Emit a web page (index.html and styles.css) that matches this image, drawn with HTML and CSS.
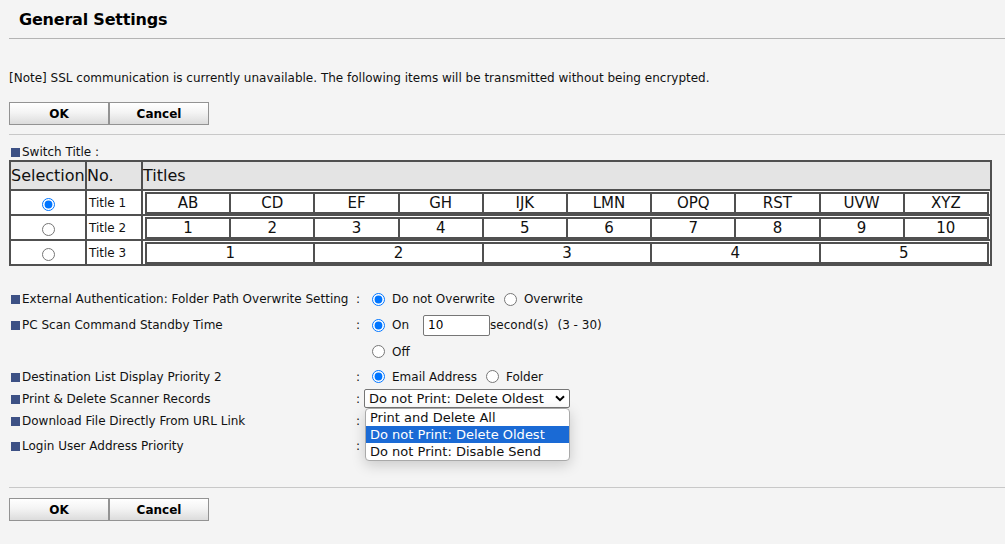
FILE: index.html
```html
<html>
    <head>
        <title>General Settings</title>
        <meta name="viewport" content="width=device-width, initial-scale=1" />
        <link rel="stylesheet" href="styles.css">
    </head>
    <body>
        <form class="page" method="post" action="/post">

            <h1 class="page__title">General Settings</h1>
            <div class="rule rule--dark"></div>

            <p class="note">[Note] SSL communication is currently unavailable. The following items will be transmitted without being encrypted.</p>

            <div class="buttons">
                <button type="button" class="button">OK</button>
                <button type="button" class="button">Cancel</button>
            </div>
            <div class="rule rule--top"></div>

            <div class="section"><span class="bullet"></span>Switch Title :</div>

            <table class="switch">
                <tr class="switch__head">
                    <th class="switch__sel">Selection</th>
                    <th class="switch__no">No.</th>
                    <th class="switch__titles">Titles</th>
                </tr>
                <tr>
                    <td class="switch__radio"><input type="radio" name="title" checked></td>
                    <td class="switch__name">Title 1</td>
                    <td class="switch__cells">
                        <table class="titles">
                            <tr><td>AB</td><td>CD</td><td>EF</td><td>GH</td><td>IJK</td><td>LMN</td><td>OPQ</td><td>RST</td><td>UVW</td><td>XYZ</td></tr>
                        </table>
                    </td>
                </tr>
                <tr>
                    <td class="switch__radio"><input type="radio" name="title"></td>
                    <td class="switch__name">Title 2</td>
                    <td class="switch__cells">
                        <table class="titles">
                            <tr><td>1</td><td>2</td><td>3</td><td>4</td><td>5</td><td>6</td><td>7</td><td>8</td><td>9</td><td>10</td></tr>
                        </table>
                    </td>
                </tr>
                <tr>
                    <td class="switch__radio"><input type="radio" name="title"></td>
                    <td class="switch__name">Title 3</td>
                    <td class="switch__cells">
                        <table class="titles">
                            <tr><td>1</td><td>2</td><td>3</td><td>4</td><td>5</td></tr>
                        </table>
                    </td>
                </tr>
            </table>

            <div class="settings">
                <div class="setting setting--first">
                    <div class="setting__label"><span class="bullet"></span>External Authentication: Folder Path Overwrite Setting</div>
                    <div class="setting__colon">:</div>
                    <div class="setting__value">
                        <label class="choice"><input type="radio" name="overwrite" checked>Do not Overwrite</label>
                        <label class="choice"><input type="radio" name="overwrite">Overwrite</label>
                    </div>
                </div>

                <div class="setting">
                    <div class="setting__label"><span class="bullet"></span>PC Scan Command Standby Time</div>
                    <div class="setting__colon">:</div>
                    <div class="setting__value">
                        <label class="choice choice--on"><input type="radio" name="standby" checked>On</label>
                        <input type="text" class="field" value="10">
                        <span class="unit">second(s)</span>
                        <span class="range">(3 - 30)</span>
                    </div>
                </div>

                <div class="setting setting--off">
                    <div class="setting__label"></div>
                    <div class="setting__colon"></div>
                    <div class="setting__value">
                        <label class="choice"><input type="radio" name="standby">Off</label>
                    </div>
                </div>

                <div class="setting setting--dest">
                    <div class="setting__label"><span class="bullet"></span>Destination List Display Priority 2</div>
                    <div class="setting__colon">:</div>
                    <div class="setting__value">
                        <label class="choice"><input type="radio" name="dest" checked>Email Address</label>
                        <label class="choice"><input type="radio" name="dest">Folder</label>
                    </div>
                </div>

                <div class="setting setting--short">
                    <div class="setting__label"><span class="bullet"></span>Print &amp; Delete Scanner Records</div>
                    <div class="setting__colon">:</div>
                    <div class="setting__value">
                        <div class="dropdown">
                            <div class="dropdown__box">
                                <span>Do not Print: Delete Oldest</span>
                                <svg class="dropdown__arrow" width="10" height="7" viewBox="0 0 10 7"><path d="M1 1.2 L5 5.2 L9 1.2" fill="none" stroke="#000" stroke-width="2"/></svg>
                            </div>
                            <ul class="dropdown__list">
                                <li class="dropdown__item">Print and Delete All</li>
                                <li class="dropdown__item dropdown__item--active">Do not Print: Delete Oldest</li>
                                <li class="dropdown__item">Do not Print: Disable Send</li>
                            </ul>
                        </div>
                    </div>
                </div>

                <div class="setting setting--short">
                    <div class="setting__label"><span class="bullet"></span>Download File Directly From URL Link</div>
                    <div class="setting__colon">:</div>
                    <div class="setting__value"></div>
                </div>

                <div class="setting setting--login">
                    <div class="setting__label"><span class="bullet"></span>Login User Address Priority</div>
                    <div class="setting__colon">:</div>
                    <div class="setting__value"></div>
                </div>
            </div>

            <div class="rule rule--bottom"></div>

            <div class="buttons">
                <button type="button" class="button">OK</button>
                <button type="button" class="button">Cancel</button>
            </div>

        </form>
    </body>
</html>
```

FILE: styles.css
```css
* {
    padding: 0px;
    margin: 0px;
    list-style-type: none;
    box-sizing: border-box;
}

html, body{
    font-family: "DejaVu Sans", Verdana, sans-serif;
    font-size: 12px;
    color: #111;
    background-color: #f4f4f4;
    width: 100%;
    height: 100%;
}

.page{
    padding-left: 9px;
}

.page__title{
    font-size: 16px;
    font-weight: bold;
    line-height: 20px;
    padding: 10px 0 8px 10px;
    color: #000;
    letter-spacing: -0.2px;
}

.rule{
    height: 1px;
    background: #c8c8c8;
}
.rule--dark{
    background: #b4b4b4;
}
.rule--top{
    margin-top: 9px;
}
.rule--bottom{
    margin-top: 28px;
}

.note{
    line-height: 16px;
    margin-top: 31px;
}

.buttons{
    display: flex;
    margin-top: 16px;
}
.rule--bottom + .buttons{
    margin-top: 10px;
}

.button{
    width: 100px;
    height: 23px;
    border: solid 1px #939393;
    background: linear-gradient(#ffffff, #f4f4f4 45%, #dcdcdc);
    font-family: "DejaVu Sans", Verdana, sans-serif;
    font-weight: bold;
    font-size: 12px;
    color: #000;
}

.bullet{
    display: inline-block;
    width: 9px;
    height: 9px;
    margin: 0 2px 0 2px;
    background: #3d5185;
    vertical-align: -1px;
}

.section{
    line-height: 16px;
    margin-top: 9px;
}

.switch{
    width: 983px;
    table-layout: fixed;
    border-spacing: 0;
    border: solid 1px #505050;
    background: #fff;
}
.switch td, .switch th{
    border: solid 1px #505050;
    padding: 0;
}
.switch__head th{
    height: 28px;
    background: #e4e4e4;
    font-weight: normal;
    font-size: 16px;
    line-height: 26px;
    padding-top: 1px;
    text-align: left;
}
.switch__sel{
    width: 76px;
}
.switch__no{
    width: 56px;
}
.switch tr td{
    height: 25px;
}
.switch__radio{
    text-align: center;
}
.switch__radio input{
    margin: 4px 0 0 0;
}
.switch__name{
    font-size: 12px;
    padding-left: 2px !important;
}
.switch__cells{
    padding: 1px 1px 0 2px !important;
    vertical-align: top;
}

.titles{
    width: 100%;
    table-layout: fixed;
    border-spacing: 0;
    border: solid 1px #505050;
}
.titles td{
    height: 20px !important;
    border: solid 1px #505050;
    font-size: 15px;
    text-align: center;
    line-height: 18px;
}

.settings{
    margin-top: 20px;
}

.setting{
    display: flex;
    align-items: center;
    height: 26px;
}
.setting--off{
    height: 27px;
}
.setting--dest{
    height: 23px;
}
.setting--short{
    height: 22px;
}
.setting--login{
    height: 27px;
}

.setting__label{
    width: 343px;
    padding-left: 2px;
}
.setting__label .bullet{
    margin: 0 2px 0 0;
}
.setting__colon{
    width: 12px;
    text-align: center;
}
.setting__value{
    display: flex;
    align-items: center;
}

.choice{
    display: flex;
    align-items: center;
    margin-right: 1px;
}
.choice input{
    margin: 0 7px 0 8px;
}
.choice--on{
    margin-right: 14px;
}

.field{
    width: 67px;
    height: 21px;
    border: solid 1px #767676;
    border-radius: 2px;
    padding-left: 4px;
    font-family: "DejaVu Sans", Verdana, sans-serif;
    font-size: 12px;
    background: #fff;
}
.unit{
    margin-right: 9px;
}

.dropdown{
    position: relative;
    margin-top: -2px;
    font-size: 13px;
}
.dropdown__box{
    display: flex;
    align-items: center;
    justify-content: space-between;
    width: 206px;
    height: 19px;
    border: solid 1px #767676;
    border-radius: 2px;
    background: #fff;
    padding: 0 4px 0 4px;
}
.dropdown__list{
    position: absolute;
    top: 19px;
    left: 1px;
    width: 205px;
    background: #fff;
    border: solid 1px #a9a9a9;
    border-radius: 4px;
    box-shadow: 0 4px 14px rgba(0, 0, 0, 0.18);
    overflow: hidden;
    z-index: 2;
}
.dropdown__item{
    height: 17px;
    line-height: 17px;
    padding-left: 4px;
}
.dropdown__item--active{
    background: #1a6ad5;
    color: #fff;
}
```
